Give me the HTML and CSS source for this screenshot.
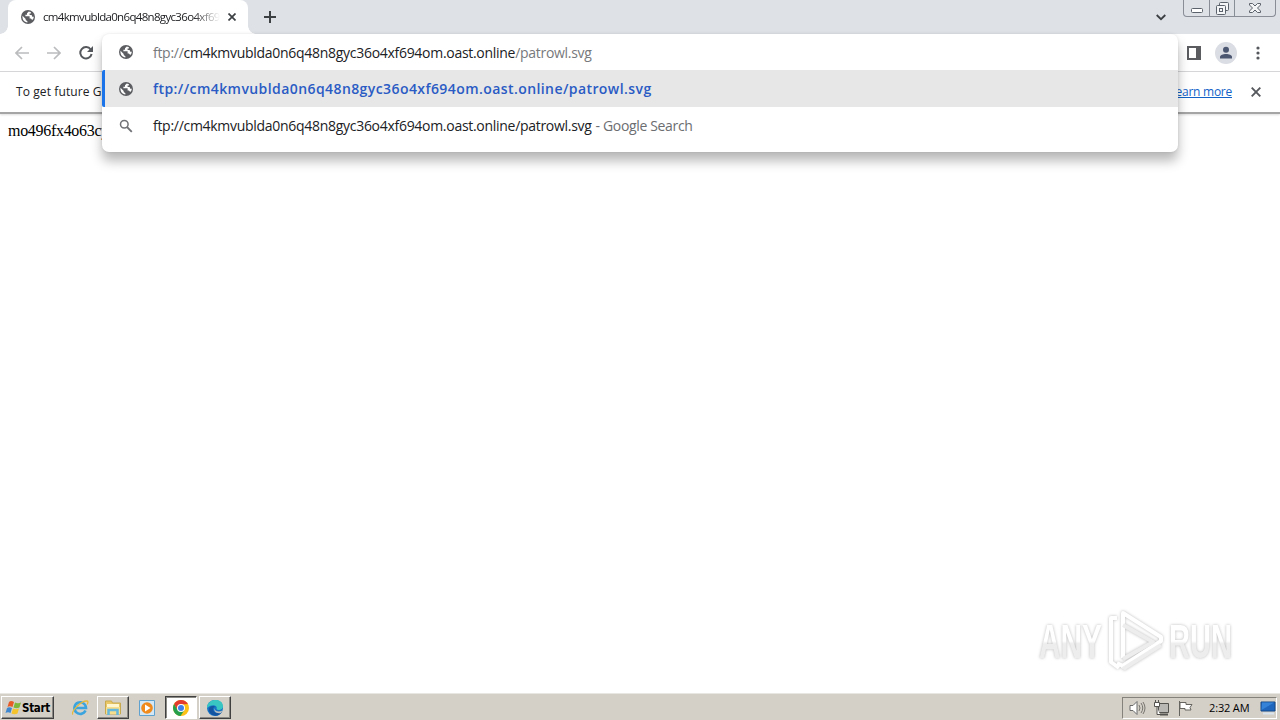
FILE: index.html
```html
<!DOCTYPE html>
<html lang="en">
<head>
  <meta charset="UTF-8" />
  <title>cm4kmvublda0n6q48n8gyc36o4xf694om.oast.online</title>
  <link rel="stylesheet" href="styles.css">
</head>
<body>
  <svg width="0" height="0" class="defs">
    <symbol id="globe" viewBox="0 0 14 14">
      <circle cx="7" cy="7" r="7" fill="#5b5d61"/>
      <path d="M7.800 1.600 6 3.200v1.500H4.400v1.600h4.200v2.200h1.300l1.300 1.600c1.100-1 1.600-2 1.500-3.600-.6.5-1.300.4-1.700-.2l-.3-1.300H8.600V3.500h1.300V2.200zM1.500 5.800l3.200 3.100v1.200l1.700 1.200v1.200C3.300 12.200 1 9.500 1.500 5.800z" fill="#fff"/>
    </symbol>
  </svg>

  <div class="tab-strip">
    <div class="tab">
      <svg class="globe" width="14" height="14"><use href="#globe"/></svg>
      <span class="tab-title">cm4kmvublda0n6q48n8gyc36o4xf69</span>
      <svg class="tab-close" width="8" height="8" viewBox="0 0 8 8"><path d="M.5.5l7 7m0-7l-7 7" stroke="#3c4043" stroke-width="1.700"/></svg>
    </div>
    <svg class="new-tab" width="12" height="12" viewBox="0 0 12 12"><path d="M6 0v12M0 6h12" stroke="#3c4043" stroke-width="2"/></svg>
    <svg class="tab-search" width="10" height="7" viewBox="0 0 10 7"><path d="M.7 1L5 5.200 9.300 1" fill="none" stroke="#3c4043" stroke-width="1.800"/></svg>
    <div class="window-controls">
      <span><svg width="12" height="5" viewBox="0 0 12 5"><rect x=".5" y=".5" width="11" height="4" rx="1" fill="#fff" stroke="#5c626b"/></svg></span>
      <span><svg width="13" height="13" viewBox="0 0 13 13"><g fill="#f4f5f7" stroke="#5c626b"><rect x="3.500" y=".5" width="9" height="8" rx="1"/><rect x=".5" y="3.500" width="9" height="9" rx="1"/><rect x="3.500" y="6.500" width="3" height="3"/></g></svg></span>
      <span><svg width="12" height="10" viewBox="0 0 12 10"><path d="M.5.5h3L6 3 8.500.5h3v1.500L8.500 5l3 3v1.500h-3L6 7 3.500 9.500h-3V8l3-3-3-3z" fill="#f4f5f7" stroke="#5c626b"/></svg></span>
    </div>
  </div>

  <div class="toolbar">
    <svg width="14" height="14" viewBox="0 0 14 14"><path d="M14 7H1.500M7 1L1 7l6 6" fill="none" stroke="#babcbe" stroke-width="1.700"/></svg>
    <svg width="14" height="14" viewBox="0 0 14 14"><path d="M0 7h12.500M7 1l6 6-6 6" fill="none" stroke="#babcbe" stroke-width="1.700"/></svg>
    <svg width="14" height="14" viewBox="0 0 14 14"><path d="M11.700 3.500A5.700 5.700 0 1 0 12.600 8" fill="none" stroke="#55585c" stroke-width="2"/><path d="M14 0v6H8z" fill="#55585c"/></svg>
    <div class="toolbar-right">
      <svg width="14" height="14" viewBox="0 0 14 14"><path d="M1 1h12v12H1z" fill="none" stroke="#5a5c60" stroke-width="2"/><path d="M9 1h4v12H9z" fill="#5a5c60"/></svg>
      <svg class="avatar" width="22" height="22" viewBox="0 0 22 22"><circle cx="11" cy="11" r="11" fill="#dadde3"/><circle cx="11" cy="7.700" r="3" fill="#4b5670"/><path d="M5 16.500v-1.500c0-2 3-3 6-3s6 1 6 3v1.500z" fill="#4b5670"/></svg>
      <svg width="4" height="14" viewBox="0 0 4 14"><g fill="#55585c"><circle cx="2" cy="2" r="1.600"/><circle cx="2" cy="7" r="1.600"/><circle cx="2" cy="12" r="1.600"/></g></svg>
    </div>
  </div>

  <div class="infobar">
    <span class="infobar-text">To get future G</span>
    <a class="learn-more" href="#">earn more</a>
    <svg class="infobar-close" width="10" height="10" viewBox="0 0 10 10"><path d="M.7.7l8.600 8.600m0-8.600L.7 9.300" stroke="#55585c" stroke-width="1.900"/></svg>
  </div>

  <div class="omnibox">
    <div class="row input-row">
      <svg class="globe" width="14" height="14"><use href="#globe"/></svg>
      <span class="url"><i>ftp://</i>cm4kmvublda0n6q48n8gyc36o4xf694om.oast.online<i>/patrowl.svg</i></span>
    </div>
    <div class="row selected">
      <svg class="globe" width="14" height="14"><use href="#globe"/></svg>
      <span class="url match">ftp://cm4kmvublda0n6q48n8gyc36o4xf694om.oast.online/patrowl.svg</span>
    </div>
    <div class="row">
      <svg class="globe" width="14" height="14" viewBox="0 0 14 14"><circle cx="5.300" cy="5.300" r="3.800" fill="none" stroke="#707276" stroke-width="1.500"/><path d="M8 8l4.800 4.800" stroke="#707276" stroke-width="1.800"/></svg>
      <span class="url">ftp://cm4kmvublda0n6q48n8gyc36o4xf694om.oast.online/patrowl.svg</span>
      <span class="provider">- Google Search</span>
    </div>
  </div>

  <div class="page">mo496fx4o63cy</div>

  <svg class="watermark" width="245" height="70" viewBox="0 0 245 70">
    <defs>
      <linearGradient id="fade" x1="0" y1="0" x2="0" y2="1">
        <stop offset=".5" stop-color="#fff"/>
        <stop offset=".55" stop-color="#ededed"/>
      </linearGradient>
    </defs>
    <g fill="url(#fade)">
      <text x="4" y="53" textLength="63" lengthAdjust="spacingAndGlyphs">ANY</text>
      <text x="134" y="53" textLength="63" lengthAdjust="spacingAndGlyphs">RUN</text>
    </g>
    <g fill="none" stroke="#fff" stroke-width="4" stroke-linejoin="round">
      <path d="M82 13h-6v44l8 6"/>
      <path d="M88 61l-6-3"/>
      <path d="M88 53V8l38 24v4L86 62" />
      <path d="M88 20l30 17-30 17M88 64l38-24" stroke="#ededed"/>
    </g>
  </svg>

  <div class="taskbar">
    <div class="task-button start">
      <svg width="17" height="16" viewBox="0 0 17 16"><path d="M4 2q2-2 5 0L7.500 7q-3-1.500-5 0z" fill="#e65b26"/><path d="M10 2.500q3 1.500 6 0L14.500 7.500q-3 1.500-6 0z" fill="#7eb83b"/><path d="M2 8q2-1.500 5 0l-1.500 5q-2.500-1.500-5 0z" fill="#3f88d0"/><path d="M8 8.500q3 1.500 6 0L12.500 13.500q-3 1.500-6 0z" fill="#f5c32c"/></svg>
      <span>Start</span>
    </div>
    <svg class="quick ie" width="18" height="18" viewBox="0 0 18 18"><path d="M14.500 11.500A5.800 5.800 0 1 1 15 9H5" fill="none" stroke="#3ba4de" stroke-width="2.600"/><path d="M2 15.500C-.5 13 10 1.500 16 2c1.500.3 1 2 .2 3.500" fill="none" stroke="#e6b93c" stroke-width="1.300"/></svg>
    <div class="task-button app">
      <svg width="18" height="17" viewBox="0 0 18 17"><path d="M1.500 2h6l1 2h8v11h-15z" fill="#e9c766" stroke="#c9a94e"/><path d="M3 5h12v4H3z" fill="#fff6cf"/><path d="M2 8h14v7H2z" fill="#f6de8d"/><path d="M4.500 16v-5h9v5" fill="none" stroke="#66b7dc" stroke-width="2.500"/></svg>
    </div>
    <svg class="quick wmp" width="16" height="16" viewBox="0 0 16 16"><path d="M.5.5h15v15H.5z" fill="#d3e7f5" stroke="#5fa2cf"/><circle cx="8" cy="8" r="5.800" fill="#f08a1d"/><path d="M6 4.500v7L11.500 8z" fill="#fff"/></svg>
    <div class="task-button app active">
      <svg width="16" height="16" viewBox="0 0 16 16"><circle cx="8" cy="8" r="8" fill="#fbc116"/><path d="M1.100 4A8 8 0 0 1 14.900 4L8 4.500 4.500 10z" fill="#e33b2e"/><path d="M1.100 4A8 8 0 0 0 7.500 16L11.500 10 4.500 10z" fill="#269f4c"/><circle cx="8" cy="8" r="4" fill="#fff"/><circle cx="8" cy="8" r="3" fill="#3f7fe8"/></svg>
    </div>
    <div class="task-button app edge">
      <svg width="16" height="16" viewBox="0 0 16 16"><circle cx="8" cy="8" r="8" fill="#1672c4"/><path d="M0 8C0-2 16-3 16 6.500c0 3.500-5 4.500-6.500 2.500C11 6 6 3 0 8z" fill="#39c6c3"/><path d="M6 9c0 4 5 5 9 3-3 5-11 5-13-1C1 7 5 5 8 6.500 7 7 6 8 6 9z" fill="#1454a0"/><path d="M8 8c-1 3 3 4.500 7.500 2.500L14 13C9 14 6 11 8 8z" fill="#c0c0be"/></svg>
    </div>
    <div class="tray">
      <svg width="17" height="16" viewBox="0 0 17 16"><path d="M1 5.500h3L8 1.500v13l-4-4H1z" fill="#fff" stroke="#6a6a6a"/><path d="M10 5q2 3 0 6m2-8q3.500 5 0 10m2-11q4 6 0 12" fill="none" stroke="#77756f"/></svg>
      <svg width="17" height="16" viewBox="0 0 17 16"><path d="M5.500 3.500h10v9h-10z" fill="#b9b8b5" stroke="#55534f"/><path d="M7 14.500h8" stroke="#55534f" stroke-width="2"/><path d="M1.500 2.500h5v4h-5zM2.500 0v3m3-3v3M4 7v7.500h3" fill="#fff" stroke="#55534f"/></svg>
      <svg width="17" height="16" viewBox="0 0 17 16"><path d="M2.500 1v15" stroke="#66645f"/><path d="M3 2.500h6v2h6l-2 3 1 2.500H8v-1.500H3z" fill="#fff" stroke="#66645f"/></svg>
      <span class="clock">2:32 AM</span>
      <svg width="16" height="14" viewBox="0 0 16 14"><path d="M1 1h14v9H1z" fill="#1e66bd" stroke="#174887"/><path d="M1.500 9L14 1.500H2z" fill="#3583d8"/><path d="M3 12.500h11" stroke="#d9e4ef" stroke-width="2"/></svg>
    </div>
  </div>
</body>
</html>
```
FILE: styles.css
```css
* { box-sizing: border-box; }
body {
  margin: 0;
  width: 1280px;
  height: 720px;
  overflow: hidden;
  position: relative;
  display: flex;
  flex-direction: column;
  background: #fff;
  color: #202124;
  font-family: "Open Sans", "Noto Sans", sans-serif;
}
svg { display: block; flex: none; }
.defs { position: absolute; }
.tab-strip {
  height: 34px;
  display: flex;
  align-items: flex-start;
  background: #dee1e6;
}
.tab {
  position: relative;
  width: 240px;
  height: 34px;
  margin-left: 8px;
  padding-left: 13px;
  display: flex;
  align-items: center;
  background: #fff;
  border-radius: 8px 8px 0 0;
}
.tab::before, .tab::after {
  content: "";
  position: absolute;
  bottom: 0;
  width: 8px;
  height: 8px;
}
.tab::before {
  left: -8px;
  background: radial-gradient(circle at 0 0, transparent 7.5px, #fff 8px);
}
.tab::after {
  right: -8px;
  background: radial-gradient(circle at 100% 0, transparent 7.5px, #fff 8px);
}
.tab-title {
  width: 177px;
  margin: -1px 8px 0;
  white-space: nowrap;
  font-size: 11.5px;
  letter-spacing: -0.67px;
  -webkit-mask-image: linear-gradient(to right, #000 150px, transparent);
}
.new-tab { margin: 11px 0 0 16px; }
.tab-search { margin: 14px 0 0 auto; }
.window-controls {
  display: flex;
  width: 93px;
  height: 17px;
  margin: 0 4px 0 17px;
  border: 1px solid #888d96;
  border-top: 0;
  border-radius: 0 0 4px 4px;
}
.window-controls span {
  width: 25px;
  display: flex;
  justify-content: center;
  align-items: center;
}
.window-controls span + span { border-left: 1px solid #888d96; }
.window-controls span:first-child { padding-top: 4px; }
.window-controls span:last-child { flex: 1; }
.toolbar {
  height: 38px;
  padding: 0 20px 0 15px;
  display: flex;
  align-items: center;
  gap: 18px;
  border-bottom: 1px solid #d5d6d8;
}
.toolbar-right {
  margin-left: auto;
  display: flex;
  align-items: center;
  gap: 14px;
}
.avatar + svg { margin-left: 5px; }
.infobar {
  height: 42px;
  padding: 0 19px 2px 16px;
  display: flex;
  align-items: center;
  font-size: 12px;
  border-bottom: 2px solid #a5a5a5;
  box-shadow: 0 1px 2px #ddd;
}
.infobar-text { letter-spacing: 0.1px; }
.infobar-close { margin-top: 2px; }
.learn-more {
  margin: 0 19px 0 auto;
  color: #1262c8;
  letter-spacing: -0.25px;
}
.page {
  padding: 8px;
  font: 16px "Liberation Serif", serif;
  letter-spacing: -0.3px;
  color: #000;
}
.omnibox {
  position: absolute;
  left: 102px;
  top: 34px;
  width: 1076px;
  height: 118px;
  background: #fff;
  border-radius: 7px;
  box-shadow: 0 9px 12px rgba(0, 0, 0, .28), 0 0 3px rgba(0, 0, 0, .1);
}
.row {
  height: 37px;
  padding-left: 17px;
  display: flex;
  align-items: center;
  font-size: 14px;
  white-space: nowrap;
}
.input-row { height: 36px; }
.selected {
  padding-left: 14px;
  background: #e7e7e7;
  border-left: 3px solid #1a73e8;
  border-radius: 2px 0 0 2px;
}
.url { margin-left: 20px; letter-spacing: -0.29px; }
.url i { font-style: normal; color: #77797c; }
.match {
  color: #2a5bc4;
  font-weight: 600;
  letter-spacing: 0.42px;
}
.provider {
  margin-left: 4px;
  color: #6b6d70;
  letter-spacing: -0.35px;
}
.watermark {
  position: absolute;
  left: 1035px;
  top: 605px;
  font: bold 49px "Liberation Sans", sans-serif;
  filter: drop-shadow(0 0 1.5px #bbb);
}
.taskbar {
  height: 27px;
  margin-top: auto;
  padding: 1px 3px 0 1px;
  display: flex;
  align-items: center;
  background: #d4d0c8;
  border-top: 1px solid #e9e7e2;
}
.task-button {
  height: 23px;
  display: flex;
  align-items: center;
  justify-content: center;
  border: 1px solid;
  border-color: #fff #404040 #404040 #fff;
  box-shadow: inset -1px -1px #8b8983;
}
.start {
  width: 53px;
  font: bold 11.5px "DejaVu Sans Condensed", "DejaVu Sans", sans-serif;
  letter-spacing: -0.3px;
  color: #000;
}
.app { width: 32px; }
.quick.ie { margin: 0 8px 0 17px; }
.quick.wmp { margin: 0 10px; }
.active {
  background: #fff;
  border-color: #404040 #fff #fff #404040;
  box-shadow: inset 1px 1px #8b8983;
}
.edge { margin-left: 2px; }
.tray {
  width: 155px;
  height: 22px;
  margin-left: auto;
  padding-left: 6px;
  display: flex;
  align-items: center;
  gap: 7px;
  border: 1px solid;
  border-color: #85827b #fff #fff #85827b;
}
.clock {
  width: 43px;
  margin: 0 3px 0 8px;
  font-size: 11px;
  white-space: nowrap;
  letter-spacing: -0.15px;
  color: #000;
}
```
